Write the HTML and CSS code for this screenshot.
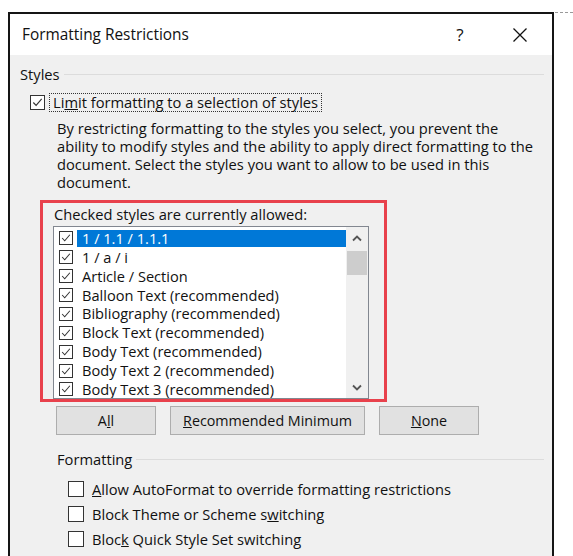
FILE: index.html
```html
<!DOCTYPE html>
<html lang="en">
<head>
<meta charset="utf-8">
<title>Formatting Restrictions</title>
<link rel="stylesheet" href="styles.css">
</head>
<body>
<div class="dialog">
  <div class="titlebar">
    <span class="title">Formatting Restrictions</span>
    <span class="help">?</span>
    <span class="close"><svg width="16" height="16" viewBox="0 0 16 16"><path d="M1.5 1.5 L14.5 14.5 M14.5 1.5 L1.5 14.5" stroke="#111" stroke-width="1.3" fill="none"/></svg></span>
  </div>
  <div class="content">
    <div class="group-head"><span>Styles</span><i class="rule"></i></div>
    <div class="limit-row">
      <span class="cb"><svg viewBox="0 0 14 14"><path d="M2.5 7 L5.5 10.2 L11.5 3.2" stroke="#333" stroke-width="1.2" fill="none"/></svg></span>
      <span class="focus">Li<u>m</u>it formatting to a selection of styles</span>
    </div>
    <p class="desc">By restricting formatting to the styles you select, you prevent the<br>ability to modify styles and the ability to apply direct formatting to the<br>document. Select the styles you want to allow to be used in this<br>document.</p>
    <div class="redbox">
      <div class="list-label">Checked styles are currently allowed:</div>
      <div class="listbox">
        <div class="items">
          <div class="item"><span class="cb"><svg viewBox="0 0 14 14"><path d="M2.5 7 L5.5 10.2 L11.5 3.2" stroke="#333" stroke-width="1.2" fill="none"/></svg></span><span class="txt sel">1 / 1.1 / 1.1.1</span></div>
          <div class="item"><span class="cb"><svg viewBox="0 0 14 14"><path d="M2.5 7 L5.5 10.2 L11.5 3.2" stroke="#333" stroke-width="1.2" fill="none"/></svg></span><span class="txt">1 / a / i</span></div>
          <div class="item"><span class="cb"><svg viewBox="0 0 14 14"><path d="M2.5 7 L5.5 10.2 L11.5 3.2" stroke="#333" stroke-width="1.2" fill="none"/></svg></span><span class="txt">Article / Section</span></div>
          <div class="item"><span class="cb"><svg viewBox="0 0 14 14"><path d="M2.5 7 L5.5 10.2 L11.5 3.2" stroke="#333" stroke-width="1.2" fill="none"/></svg></span><span class="txt">Balloon Text (recommended)</span></div>
          <div class="item"><span class="cb"><svg viewBox="0 0 14 14"><path d="M2.5 7 L5.5 10.2 L11.5 3.2" stroke="#333" stroke-width="1.2" fill="none"/></svg></span><span class="txt">Bibliography (recommended)</span></div>
          <div class="item"><span class="cb"><svg viewBox="0 0 14 14"><path d="M2.5 7 L5.5 10.2 L11.5 3.2" stroke="#333" stroke-width="1.2" fill="none"/></svg></span><span class="txt">Block Text (recommended)</span></div>
          <div class="item"><span class="cb"><svg viewBox="0 0 14 14"><path d="M2.5 7 L5.5 10.2 L11.5 3.2" stroke="#333" stroke-width="1.2" fill="none"/></svg></span><span class="txt">Body Text (recommended)</span></div>
          <div class="item"><span class="cb"><svg viewBox="0 0 14 14"><path d="M2.5 7 L5.5 10.2 L11.5 3.2" stroke="#333" stroke-width="1.2" fill="none"/></svg></span><span class="txt">Body Text 2 (recommended)</span></div>
          <div class="item"><span class="cb"><svg viewBox="0 0 14 14"><path d="M2.5 7 L5.5 10.2 L11.5 3.2" stroke="#333" stroke-width="1.2" fill="none"/></svg></span><span class="txt">Body Text 3 (recommended)</span></div>
        </div>
        <div class="scrollbar">
          <span class="arrow"><svg width="10" height="7" viewBox="0 0 10 7"><path d="M1 5.5 L5 1.5 L9 5.5" stroke="#555" stroke-width="1.8" fill="none"/></svg></span>
          <span class="thumb"></span>
          <span class="track"></span>
          <span class="arrow"><svg width="10" height="7" viewBox="0 0 10 7"><path d="M1 1.5 L5 5.5 L9 1.5" stroke="#555" stroke-width="1.8" fill="none"/></svg></span>
        </div>
      </div>
    </div>
    <div class="buttons">
      <button class="btn small">A<u>l</u>l</button>
      <button class="btn wide"><u>R</u>ecommended Minimum</button>
      <button class="btn small"><u>N</u>one</button>
    </div>
    <div class="group-head fmt"><span>Formatting</span><i class="rule"></i></div>
    <div class="options">
      <div class="opt"><span class="cb empty"></span><span><u>A</u>llow AutoFormat to override formatting restrictions</span></div>
      <div class="opt"><span class="cb empty"></span><span>Block Theme or Scheme s<u>w</u>itching</span></div>
      <div class="opt"><span class="cb empty"></span><span>Bloc<u>k</u> Quick Style Set switching</span></div>
    </div>
  </div>
</div>
<div class="dash"></div>
</body>
</html>
```

FILE: styles.css
```css
* { box-sizing: border-box; }
html, body { margin: 0; }
body {
  background: #fff;
  font-family: "Open Sans", "Noto Sans", sans-serif;
  font-size: 14.7px;
  color: #111;
  display: flex;
  align-items: flex-start;
  padding: 12px 0 0 8px;
  height: 556px;
  overflow: hidden;
}
.dialog {
  width: 546px;
  height: 560px;
  border: 2px solid #151515;
  border-bottom: none;
  background: #f0f0f0;
  display: flex;
  flex-direction: column;
  flex: none;
}
.dash {
  width: 19px;
  margin-left: 1px;
  border-top: 1px dashed #999;
}
.titlebar {
  height: 41px;
  background: #fff;
  display: flex;
  align-items: center;
  padding-left: 12px;
  flex: none;
}
.title { font-size: 15.4px; color: #111; }
.help {
  margin-left: auto;
  width: 30px;
  text-align: center;
  font-size: 17px;
  color: #111;
}
.close {
  width: 46px;
  margin-left: 22px;
  margin-right: 9px;
  display: flex;
  justify-content: center;
}
.content { padding: 10px 8px 0 10px; }
.group-head {
  display: flex;
  align-items: center;
  height: 18px;
  line-height: 18px;
}
.rule {
  flex: 1;
  height: 1px;
  background: #dcdcdc;
  margin-left: 4px;
}
.limit-row {
  display: flex;
  align-items: center;
  height: 19px;
  margin-top: 10px;
  margin-left: 10px;
}
.cb {
  width: 15px;
  height: 15px;
  border: 1px solid #333;
  background: #fff;
  display: flex;
  flex: none;
}
.cb svg { width: 13px; height: 13px; }
.focus {
  margin-left: 4px;
  padding: 0 3px 0 3px;
  border: 1px dotted #333;
  line-height: 17px;
  height: 19px;
}
.desc {
  margin: 7px 0 0 37px;
  line-height: 18px;
  white-space: nowrap;
}
.redbox {
  margin: 9px 0 0 20px;
  width: 347px;
  height: 202px;
  border: 3px solid #e8414c;
}
.list-label {
  padding: 2px 0 0 11px;
  line-height: 18px;
}
.listbox {
  margin: 3px 0 0 10px;
  width: 316px;
  height: 173px;
  border: 1px solid #828790;
  background: #fff;
  display: flex;
}
.items {
  flex: 1;
  padding-top: 2px;
  overflow: hidden;
  font-size: 14.6px;
}
.item {
  display: flex;
  align-items: center;
  height: 18.875px;
  padding-left: 5px;
}
.item .cb { width: 14px; height: 14px; }
.item .cb svg { width: 12px; height: 12px; }
.txt {
  margin-left: 4px;
  padding-left: 5px;
  line-height: 17px;
  white-space: nowrap;
}
.txt.sel {
  flex: 1;
  background: #0078d7;
  color: #fff;
}
.scrollbar {
  width: 22px;
  background: #f0f0f0;
  display: flex;
  flex-direction: column;
  align-items: center;
}
.arrow {
  height: 22px;
  display: flex;
  align-items: center;
  justify-content: center;
  flex: none;
}
.thumb {
  width: 20px;
  height: 24px;
  margin-top: 2px;
  background: #cdcdcd;
  flex: none;
}
.track { flex: 1; }
.buttons {
  display: flex;
  gap: 14px;
  margin: 4px 0 0 36px;
}
.btn {
  height: 29px;
  background: #e1e1e1;
  border: 1px solid #adadad;
  font: inherit;
  font-size: 14.3px;
  color: #111;
  padding: 0;
}
.btn.small { width: 100px; }
.btn.wide { width: 195px; }
.group-head.fmt {
  margin-top: 15px;
  padding-left: 37px;
}
.options {
  margin-top: 8px;
  padding-left: 48px;
}
.opt {
  display: flex;
  align-items: center;
  height: 25px;
}
.opt .cb { width: 16px; height: 16px; }
.opt .cb + span { margin-left: 8px; }
```
